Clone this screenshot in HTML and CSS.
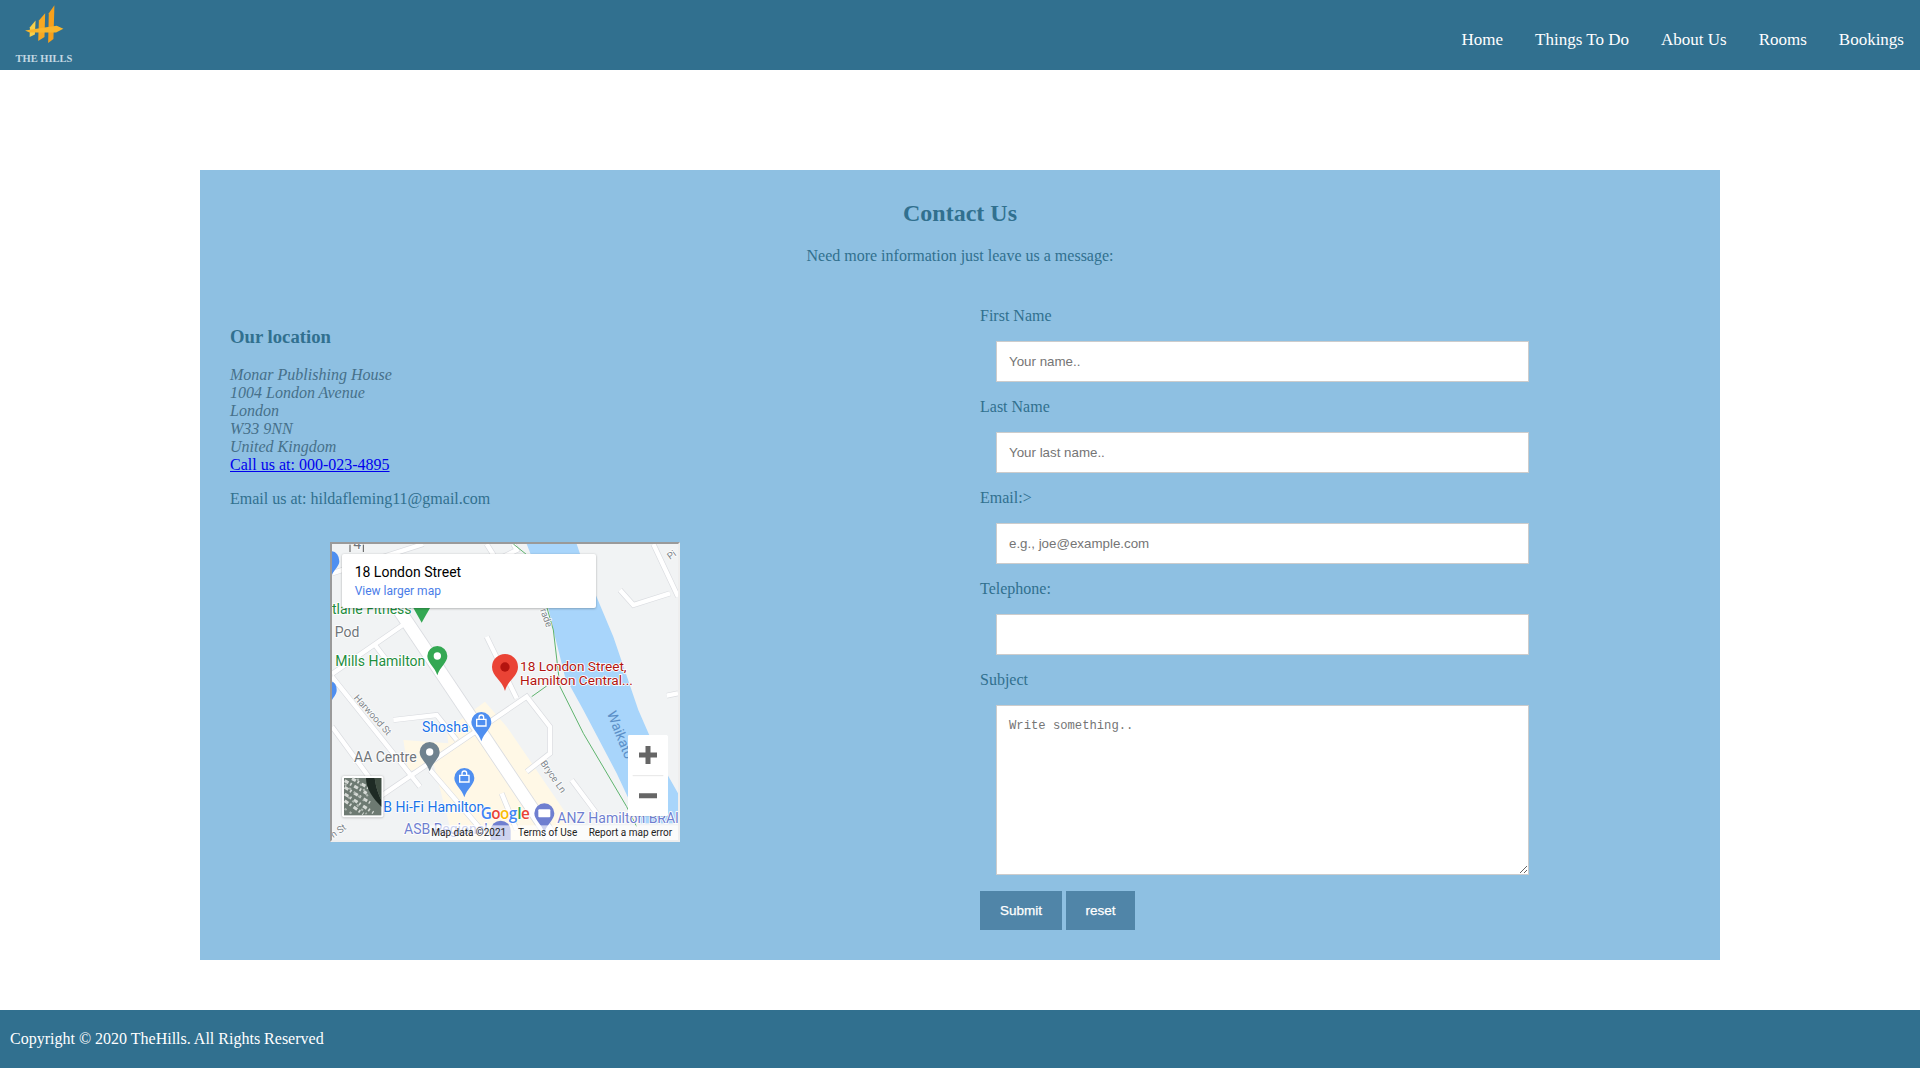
FILE: index.html
```html
<!DOCTYPE html>
<html lang="en">
<head>
<meta charset="utf-8">
<title>Contact Us - The Hills</title>
<link rel="stylesheet" href="styles.css">
</head>
<body>
<header class="topbar">
  <a class="brand" href="#">
    <svg class="brand-mark" viewBox="70 10 130 125" aria-hidden="true">
      <polygon points="108,62 91,82 90,112 106,104" fill="#f8d04a"/>
      <polygon points="137,40 118,62 116,124 135,112" fill="#f7a822"/>
      <polygon points="165,16 148,40 146,130 162,118" fill="#f7a01c"/>
      <polygon points="76,92 130,84 172,78 192,87 170,98 120,98 90,98" fill="#f9b52b"/>
    </svg>
    <span class="brand-name">THE HILLS</span>
  </a>
  <nav class="nav">
    <a href="#">Home</a>
    <a href="#">Things To Do</a>
    <a href="#">About Us</a>
    <a href="#">Rooms</a>
    <a href="#">Bookings</a>
  </nav>
</header>

<main class="contact">
  <h2 class="contact-title">Contact Us</h2>
  <p class="contact-sub">Need more information just leave us a message:</p>
  <div class="contact-cols">
    <section class="location">
      <h3 class="location-title">Our location</h3>
      <address class="address">Monar Publishing House<br>1004 London Avenue<br>London<br>W33 9NN<br>United Kingdom</address>
      <a class="phone" href="#">Call us at: 000-023-4895</a>
      <p class="email">Email us at: hildafleming11@gmail.com</p>
      <div class="map">
        <svg class="map-svg" viewBox="36 42 1038 888" aria-label="Map of 18 London Street">
          <rect x="36" y="42" width="1038" height="888" fill="#f1f3f4"/>
          <polygon class="beige" points="495,515 560,590 745,860 740,930 400,930 340,700 265,725 250,630 385,640 380,600"/>
          <polygon class="water" points="620,42 770,42 800,130 880,320 955,540 990,620 1040,730 1074,790 1074,880 960,880 890,730 790,540 735,440 705,320 670,170"/>
          <g class="roads-edge">
            <path d="M190,170 L700,930"/>
            <path d="M36,432 L270,270 M36,440 L300,770 M36,590 L190,800 M180,800 L620,500 L690,590 L690,670 L620,725 M500,320 L590,505 M330,720 L510,930 M900,180 L940,225 L1050,190 M1000,42 L1074,200 M755,750 L830,850 M545,790 L590,900 M36,130 L310,42 M220,570 L350,555 L410,630 M165,345 L215,410 M1040,497 L1074,490 M500,42 L530,90 L590,60 L580,42"/>
          </g>
          <g class="roads">
            <path d="M190,170 L700,930"/>
            <path d="M36,432 L270,270 M36,440 L300,770 M36,590 L190,800 M180,800 L620,500 L690,590 L690,670 L620,725 M500,320 L590,505 M330,720 L510,930 M900,180 L940,225 L1050,190 M1000,42 L1074,200 M755,750 L830,850 M545,790 L590,900 M36,130 L310,42 M220,570 L350,555 L410,630 M165,345 L215,410 M1040,497 L1074,490 M500,42 L530,90 L590,60 L580,42"/>
          </g>
          <path class="path-green" d="M580,42 L640,90 L700,300 L720,470 L790,610 L920,830 L950,890 M635,500 L680,468"/>
          <text class="t-grey-sm" transform="translate(100,505) rotate(48)">Harwood St</text>
          <text class="t-grey-sm" transform="translate(660,700) rotate(55)">Bryce Ln</text>
          <text class="t-grey-sm" transform="translate(660,240) rotate(70)">rade</text>
          <text class="t-grey-sm" transform="translate(1050,90) rotate(-35)">Pi</text>
          <text class="t-grey-sm" transform="translate(40,925) rotate(-35)">n St</text>
          <text class="t-water" transform="translate(860,550) rotate(68)">Waikato</text>
          <text class="t-grey" x="100" y="57" font-size="26">4</text>
          <path class="shield" d="M90,66 V44 M130,66 V44"/>
          <text class="t-grey" x="44" y="320">Pod</text>
          <text class="t-green" x="46" y="407">Mills Hamilton</text>
          <text class="t-green" x="36" y="251">tlane Fitness</text>
          <text class="t-grey" x="102" y="695">AA Centre</text>
          <text class="t-blue" x="306" y="605">Shosha</text>
          <text class="t-blue" x="190" y="845">B Hi-Fi Hamilton</text>
          <text class="t-indigo" x="252" y="912">ASB Regional</text>
          <text class="t-indigo" x="712" y="878">ANZ Hamilton BRAI</text>
          <text class="t-red" x="600" y="422">18 London Street,</text>
          <text class="t-red" x="600" y="464">Hamilton Central...</text>

          <path fill="#34a853" d="M305,225 h30 l-30,53 l-30,-53 z"/>
          <g>
            <path fill="#34a853" d="M352,348 a30,30 0 0 1 30,30 c0,20 -22,32 -30,58 c-8,-26 -30,-38 -30,-58 a30,30 0 0 1 30,-30 z"/>
            <circle cx="352" cy="378" r="11" fill="#fff"/>
          </g>
          <g>
            <path fill="#4f8ff0" d="M484,546 a30,30 0 0 1 30,30 c0,20 -22,32 -30,58 c-8,-26 -30,-38 -30,-58 a30,30 0 0 1 30,-30 z"/>
            <path class="bag" d="M470,568 h28 v20 h-28 z M477,568 v-6 a7,7 0 0 1 14,0 v6"/>
          </g>
          <g>
            <path fill="#4f8ff0" d="M433,714 a30,30 0 0 1 30,30 c0,20 -22,32 -30,58 c-8,-26 -30,-38 -30,-58 a30,30 0 0 1 30,-30 z"/>
            <path class="bag" d="M419,736 h28 v20 h-28 z M426,736 v-6 a7,7 0 0 1 14,0 v6"/>
          </g>
          <g>
            <path fill="#6f828f" d="M329,636 a30,30 0 0 1 30,30 c0,20 -22,32 -30,58 c-8,-26 -30,-38 -30,-58 a30,30 0 0 1 30,-30 z"/>
            <circle cx="329" cy="666" r="11" fill="#fff"/>
          </g>
          <g>
            <path fill="#6f7fd0" d="M673,820 a30,30 0 0 1 30,30 c0,20 -22,32 -30,58 c-8,-26 -30,-38 -30,-58 a30,30 0 0 1 30,-30 z"/>
            <rect x="655" y="838" width="36" height="24" rx="3" fill="#fff"/>
          </g>
          <path fill="#6f7fd0" d="M542,872 a30,30 0 0 1 30,30 v28 h-60 v-28 a30,30 0 0 1 30,-30 z"/>
          <path fill="#4f8ff0" d="M36,64 a22,30 0 0 1 22,30 c0,14 -14,24 -22,40 z M36,456 a14,24 0 0 1 14,24 c0,12 -8,20 -14,30 z"/>
          <g>
            <path fill="#ea4335" d="M555,372 a39,39 0 0 1 39,39 c0,28 -31,40 -39,72 c-8,-32 -39,-44 -39,-72 a39,39 0 0 1 39,-39 z"/>
            <circle cx="555" cy="411" r="14" fill="#b3140f"/>
          </g>

          <rect class="card" x="66" y="72" width="762" height="162" rx="6"/>
          <text class="t-card" x="104" y="140">18 London Street</text>
          <text class="t-link" x="104" y="194">View larger map</text>

          <rect class="ctl" x="924" y="615" width="120" height="243" rx="3"/>
          <path class="ctl-line" d="M938,737 H1030"/>
          <path class="ctl-icon" d="M984,648 V702 M957,675 H1011 M957,797 H1011"/>

          <rect class="thumb-frame" x="66" y="738" width="124" height="124" rx="6"/>
          <rect x="72" y="744" width="112" height="112" fill="#6d7a72"/>
          <path class="sat sat-a" d="M74,752 L140,790 M74,772 L150,818 M74,792 L160,848 M74,812 L130,852 M96,746 L150,776"/>
          <path class="sat sat-b" d="M74,762 L132,812 M74,836 L100,854 M112,746 L144,800 M84,800 L140,852"/>
          <path fill="#1e2a24" d="M138,744 h26 c4,30 12,50 20,66 v20 c-24,-24 -46,-52 -46,-86 z"/>
          <path fill="#3f4d42" d="M164,744 h20 v66 c-8,-16 -16,-36 -20,-66 z"/>

          <rect class="attr" x="330" y="886" width="744" height="44"/>
          <text class="t-g-b" x="482" y="866">G</text>
          <text class="t-g-r" x="514" y="866">o</text>
          <text class="t-g-y" x="540" y="866">o</text>
          <text class="t-g-b" x="566" y="866">g</text>
          <text class="t-g-g" x="592" y="866">l</text>
          <text class="t-g-r" x="603" y="866">e</text>
          <text class="t-attr" x="334" y="917">Map data ©2021</text>
          <text class="t-attr" x="594" y="917">Terms of Use</text>
          <text class="t-attr" x="806" y="917">Report a map error</text>
        </svg>
      </div>
    </section>

    <form class="form">
      <label class="field-label" for="fname">First Name</label>
      <input class="field" id="fname" type="text" placeholder="Your name..">
      <label class="field-label" for="lname">Last Name</label>
      <input class="field" id="lname" type="text" placeholder="Your last name..">
      <label class="field-label" for="mail">Email:&gt;</label>
      <input class="field" id="mail" type="text" placeholder="e.g., joe@example.com">
      <label class="field-label" for="tel">Telephone:</label>
      <input class="field" id="tel" type="text">
      <label class="field-label" for="subject">Subject</label>
      <textarea class="field field-area" id="subject" placeholder="Write something.."></textarea>
      <div class="actions">
        <button class="btn btn-submit" type="button">Submit</button>
        <button class="btn btn-reset" type="button">reset</button>
      </div>
    </form>
  </div>
</main>

<footer class="footer">Copyright © 2020 TheHills. All Rights Reserved</footer>
</body>
</html>
```

FILE: styles.css
```css
* { box-sizing: border-box; }
html, body { margin: 0; padding: 0; }
body {
  font-family: "Liberation Serif", "Times New Roman", serif;
  font-size: 16px;
  color: #31708f;
  background: #fff;
  height: 1068px;
  overflow: hidden;
}

/* Header */
.topbar {
  display: flex;
  justify-content: space-between;
  height: 70px;
  background: #31708f;
}
.brand {
  display: flex;
  flex-direction: column;
  align-items: center;
  width: 56px;
  margin-left: 16px;
  padding-top: 3px;
  text-decoration: none;
}
.brand-mark { width: 43px; height: 42px; display: block; }
.brand-name {
  margin-top: 8px;
  font-size: 10.5px;
  line-height: 12px;
  font-weight: bold;
  white-space: nowrap;
  color: #c3d8e3;
}
.nav {
  display: flex;
  gap: 32px;
  padding: 30px 16px 0 0;
  font-size: 17px;
  line-height: 20px;
}
.nav a { color: #fff; text-decoration: none; }

/* Contact panel */
.contact {
  width: 1520px;
  height: 790px;
  margin: 100px auto 50px;
  padding-top: 30px;
  background: #8ec0e2;
}
.contact-title {
  margin: 0;
  font-size: 24px;
  line-height: 27px;
  text-align: center;
}
.contact-sub {
  margin: 20px 0 0;
  line-height: 18px;
  text-align: center;
}
.contact-cols {
  display: grid;
  grid-template-columns: 780px 1fr;
  margin-top: 28px;
}

/* Location column */
.location { padding: 33px 0 0 30px; }
.location-title {
  margin: 0 0 19px;
  font-size: 18.7px;
  line-height: 21px;
}
.address { font-style: italic; line-height: 18px; color: #46708a; }
.phone { display: block; line-height: 18px; color: #00e; text-decoration: underline; }
.email { margin: 16px 0 34px; line-height: 18px; }
.map {
  width: 350px;
  height: 300px;
  margin-left: 100px;
  border: 2px solid;
  border-color: #9a9a9a #eeeeee #eeeeee #9a9a9a;
}
.map-svg { display: block; width: 346px; height: 296px; font-family: Roboto, sans-serif; }
.beige { fill: #fff8e6; }
.water { fill: #a8d5fb; }
.roads-edge, .roads, .path-green, .shield, .ctl-line, .ctl-icon, .sat, .bag { fill: none; }
.roads-edge path { stroke: #dadce0; stroke-width: 17; }
.roads-edge path:first-child { stroke-width: 42; }
.roads path { stroke: #fff; stroke-width: 13; }
.roads path:first-child { stroke-width: 37; }
.path-green { stroke: #5fb46e; stroke-width: 3; }
.shield { stroke: #555; stroke-width: 3; }
.bag { stroke: #fff; stroke-width: 4; }
.thumb-frame { fill: #fff; filter: drop-shadow(0 1px 3px rgba(0,0,0,.3)); }
.sat { stroke: #d5d9d5; }
.sat-a { stroke-width: 9; stroke-dasharray: 13 6 5 9; }
.sat-b { stroke-width: 6; stroke-dasharray: 7 11; stroke: #aeb6b0; }
.card { fill: #fff; filter: drop-shadow(0 2px 3px rgba(0,0,0,.3)); }
.ctl { fill: #fff; filter: drop-shadow(0 1px 2px rgba(0,0,0,.2)); }
.ctl-line { stroke: #e6e6e6; stroke-width: 3; }
.ctl-icon { stroke: #666; stroke-width: 15; }
.attr { fill: rgba(255,255,255,.65); }
.t-grey, .t-green, .t-blue, .t-indigo, .t-red { font-size: 42px; stroke: #fff; stroke-width: 5px; paint-order: stroke; }
.t-grey { fill: #70757a; }
.t-green { fill: #1e8e3e; }
.t-blue { fill: #1a73e8; }
.t-indigo { fill: #6f7fd0; }
.t-red { fill: #b3140f; font-size: 41px; }
.t-grey-sm { fill: #80868b; font-size: 29px; stroke: #fff; stroke-width: 4px; paint-order: stroke; }
.t-water { fill: #5b8fc7; font-size: 42px; }
.t-card { fill: #000; font-size: 42px; }
.t-link { fill: #4a7de8; font-size: 36px; }
.t-attr { fill: #222; font-size: 30px; }
.t-g-b, .t-g-r, .t-g-y, .t-g-g { font-family: "Open Sans", sans-serif; font-size: 46px; font-weight: 600; stroke: #fff; stroke-width: 4px; paint-order: stroke; }
.t-g-b { fill: #4285f4; }
.t-g-r { fill: #ea4335; }
.t-g-y { fill: #fbbc05; }
.t-g-g { fill: #34a853; }

/* Form column */
.form { display: flex; flex-direction: column; align-items: flex-start; padding-top: 14px; }
.field-label { line-height: 18px; margin-bottom: 16px; }
.field {
  width: 533px;
  height: 41px;
  margin: 0 0 16px 16px;
  padding: 0 12px;
  border: 1px solid #ccc;
  background: #fff;
  font-family: "Liberation Sans", Arial, sans-serif;
  font-size: 13.33px;
  color: #000;
  border-radius: 0;
}
.field::placeholder { color: #757575; }
.field-area {
  height: 170px;
  padding: 13px 12px;
  margin-bottom: 16px;
  font-family: "Liberation Mono", monospace;
  font-size: 12.2px;
  resize: vertical;
}
.actions { display: flex; gap: 4px; }
.btn {
  height: 39px;
  padding: 0;
  border: 0;
  background: #5085a8;
  color: #fff;
  font-family: "Liberation Sans", Arial, sans-serif;
  font-size: 13.5px;
  font-weight: normal;
  -webkit-text-stroke: 0.25px #fff;
}
.btn-submit { width: 82px; }
.btn-reset { width: 69px; }

/* Footer */
.footer {
  height: 58px;
  padding: 20px 0 0 10px;
  background: #31708f;
  color: #fff;
  font-size: 16px;
  line-height: 18px;
}
```
